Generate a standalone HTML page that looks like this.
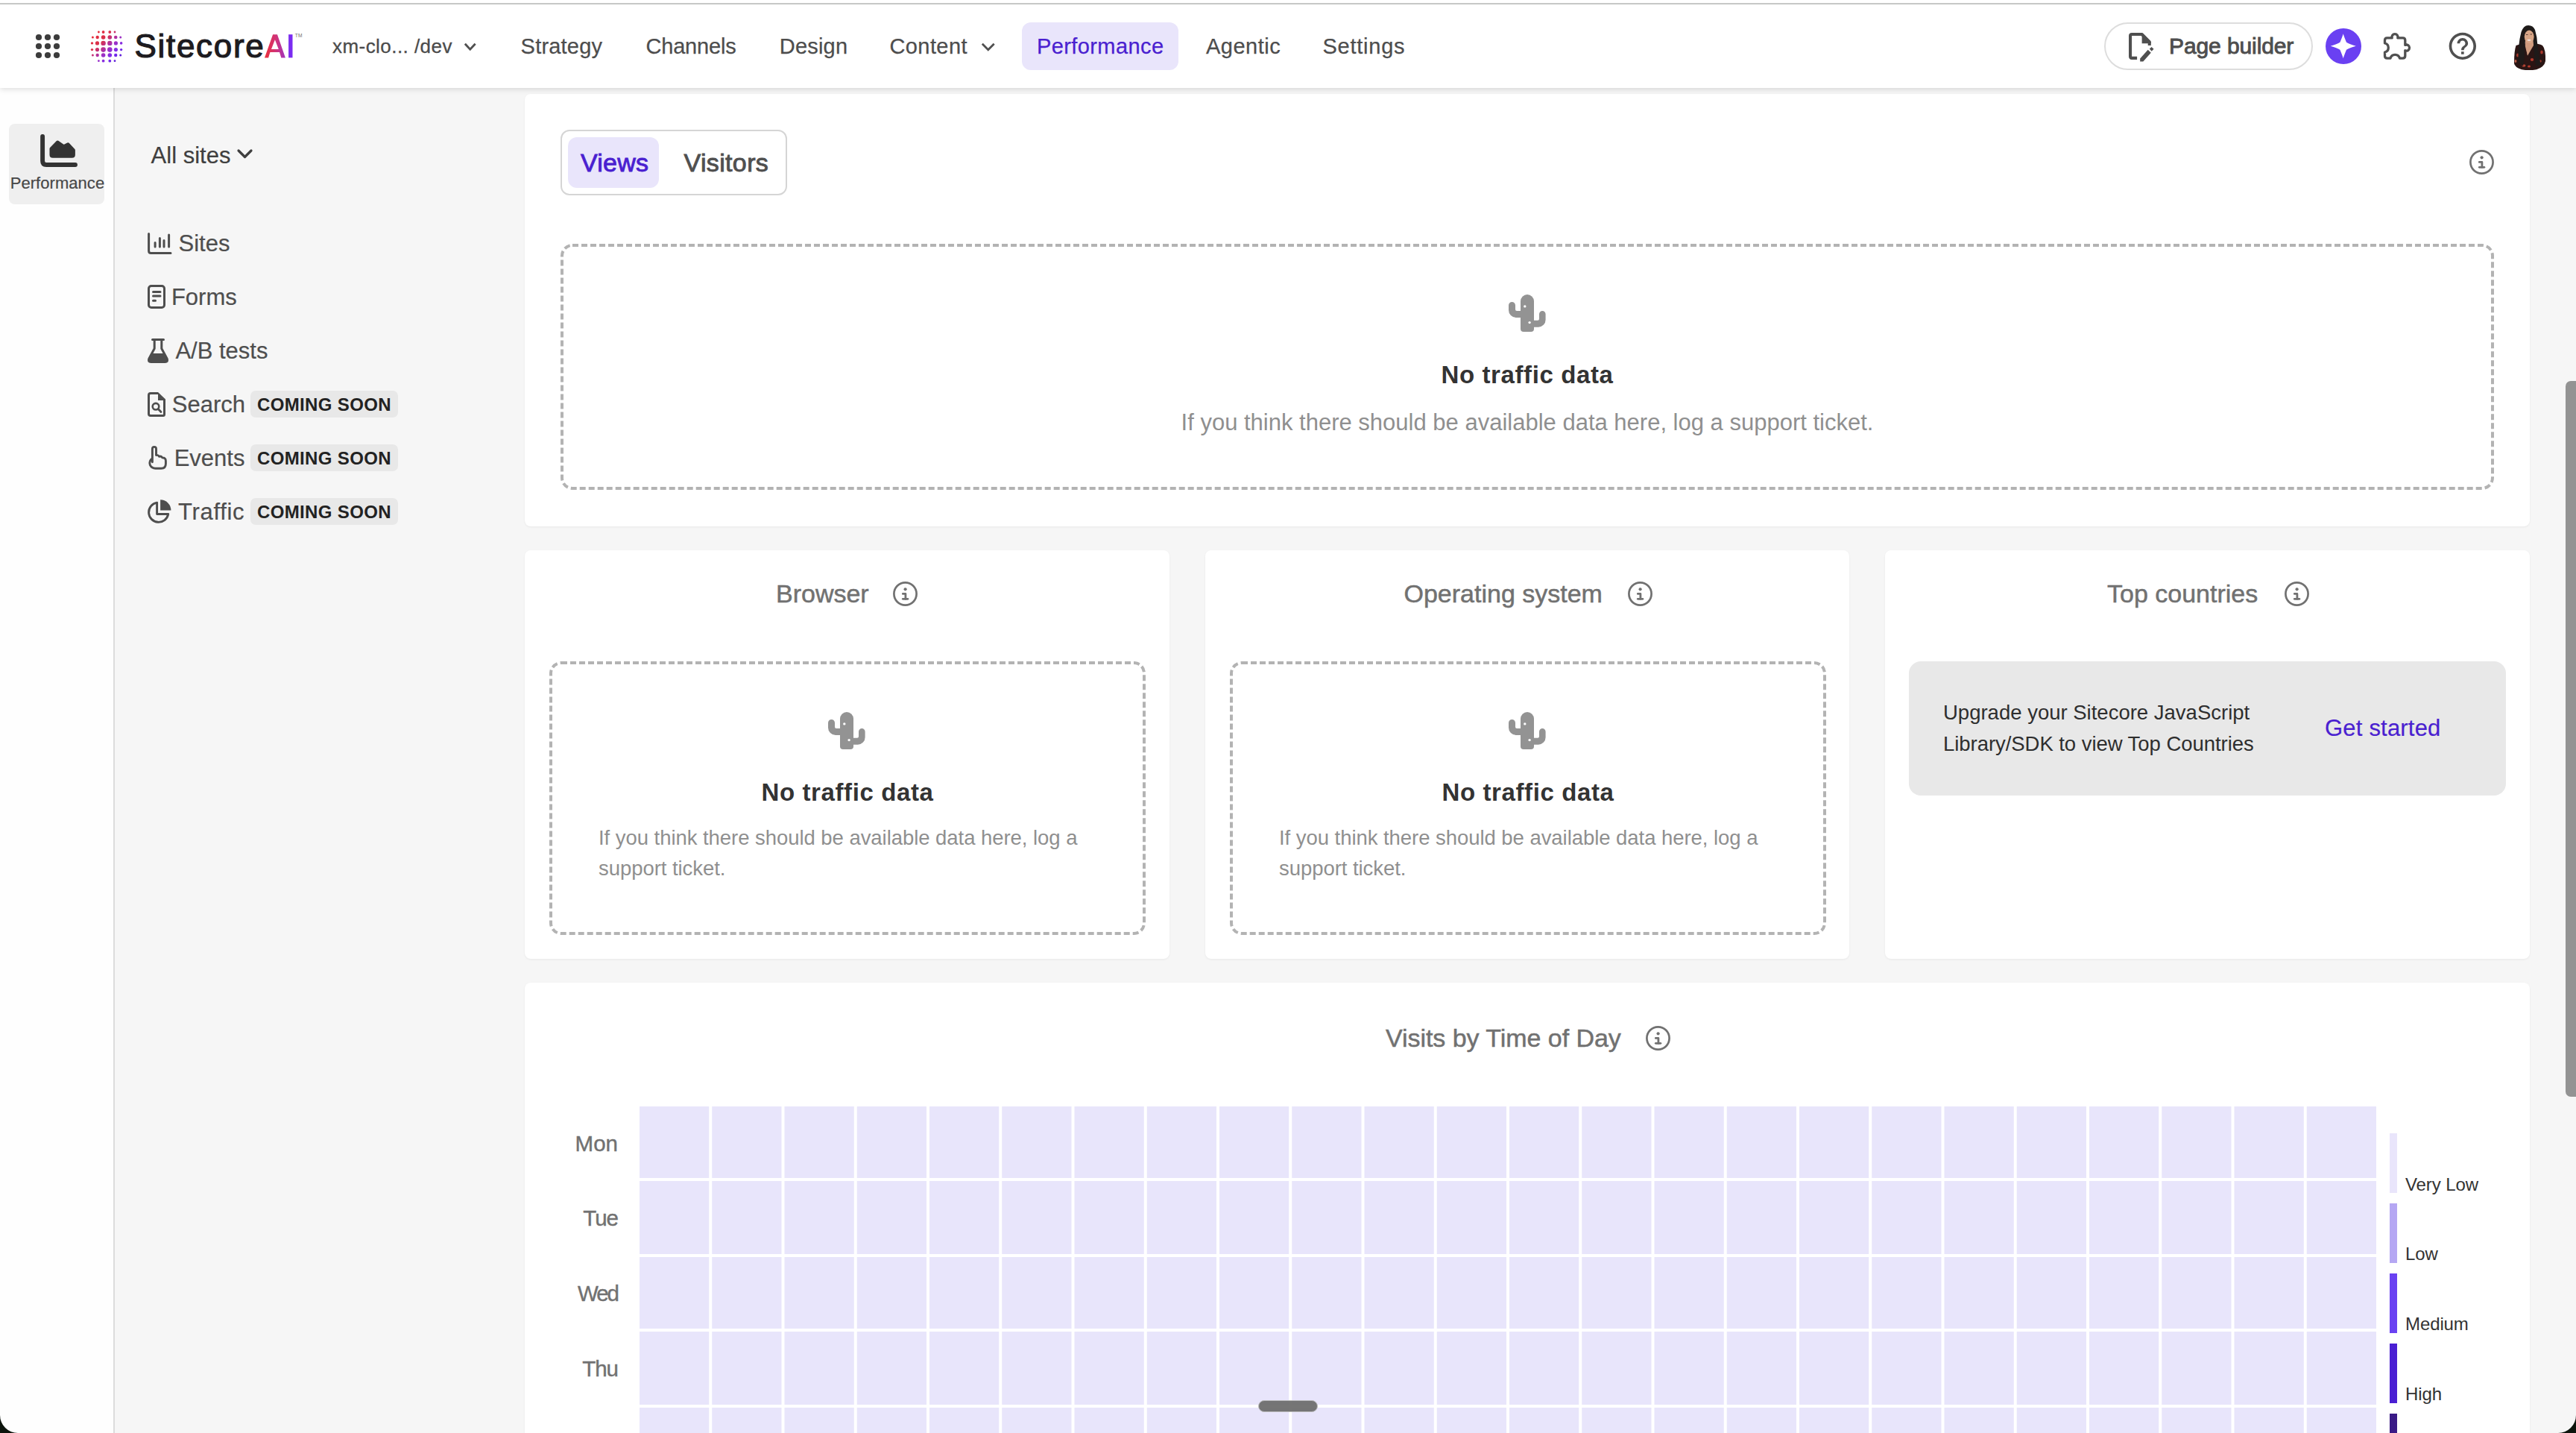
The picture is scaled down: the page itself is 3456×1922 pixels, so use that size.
<!DOCTYPE html>
<html><head><meta charset="utf-8"><style>
html,body{margin:0;padding:0;width:3456px;height:1922px;overflow:hidden;background:#0c140c}
#win{position:absolute;left:0;top:0;width:3456px;height:1922px;overflow:hidden;background:#f6f6f6;font-family:'Liberation Sans', sans-serif}
.a{position:absolute;display:block}
.t{position:absolute;line-height:1;white-space:nowrap;font-family:'Liberation Sans', sans-serif}
svg.a{overflow:visible}
@media (max-width:1800px){html{zoom:0.5}}
</style></head><body>
<div id="win"><div class="a" style="left:0px;top:0px;width:3456px;height:118px;background:#fff;box-shadow:0 2px 7px rgba(0,0,0,0.13);z-index:5"></div><div class="a" style="left:0px;top:4px;width:3456px;height:2px;background:#c7c8c7;z-index:6"></div><div id="hdr" style="position:absolute;left:0;top:0;width:3456px;height:118px;z-index:7"><svg class="a" style="left:44px;top:46px" width="40" height="40" viewBox="0 0 40 40"><circle cx="8" cy="4" r="4.1" fill="#3c3c3c"/><circle cx="8" cy="16" r="4.1" fill="#3c3c3c"/><circle cx="8" cy="28" r="4.1" fill="#3c3c3c"/><circle cx="20" cy="4" r="4.1" fill="#3c3c3c"/><circle cx="20" cy="16" r="4.1" fill="#3c3c3c"/><circle cx="20" cy="28" r="4.1" fill="#3c3c3c"/><circle cx="32" cy="4" r="4.1" fill="#3c3c3c"/><circle cx="32" cy="16" r="4.1" fill="#3c3c3c"/><circle cx="32" cy="28" r="4.1" fill="#3c3c3c"/></svg><svg class="a" style="left:118px;top:38px" width="50" height="50" viewBox="118 38 50 50"><defs><linearGradient id="lg" gradientUnits="userSpaceOnUse" x1="120" y1="40" x2="166" y2="86"><stop offset="0" stop-color="#f2262c"/><stop offset="0.35" stop-color="#d8324e"/><stop offset="0.55" stop-color="#a030c0"/><stop offset="0.72" stop-color="#7a2cf2"/><stop offset="1" stop-color="#3308b0"/></linearGradient></defs><circle cx="132.4" cy="43.0" r="1.4" fill="url(#lg)"/><circle cx="138.6" cy="43.0" r="1.9" fill="url(#lg)"/><circle cx="147.3" cy="43.0" r="1.9" fill="url(#lg)"/><circle cx="154.0" cy="43.0" r="1.4" fill="url(#lg)"/><circle cx="124.4" cy="50.0" r="1.5" fill="url(#lg)"/><circle cx="130.7" cy="50.0" r="2.2" fill="url(#lg)"/><circle cx="138.6" cy="50.0" r="2.8" fill="url(#lg)"/><circle cx="147.3" cy="50.0" r="2.8" fill="url(#lg)"/><circle cx="155.2" cy="50.0" r="2.3" fill="url(#lg)"/><circle cx="161.7" cy="50.0" r="1.5" fill="url(#lg)"/><circle cx="123.5" cy="57.9" r="1.7" fill="url(#lg)"/><circle cx="130.5" cy="57.9" r="2.6" fill="url(#lg)"/><circle cx="138.6" cy="57.9" r="3.2" fill="url(#lg)"/><circle cx="147.3" cy="57.9" r="3.2" fill="url(#lg)"/><circle cx="155.4" cy="57.9" r="2.6" fill="url(#lg)"/><circle cx="162.6" cy="57.9" r="1.8" fill="url(#lg)"/><circle cx="123.5" cy="66.6" r="1.7" fill="url(#lg)"/><circle cx="130.5" cy="66.6" r="2.6" fill="url(#lg)"/><circle cx="138.6" cy="66.6" r="3.3" fill="url(#lg)"/><circle cx="147.3" cy="66.6" r="3.3" fill="url(#lg)"/><circle cx="155.4" cy="66.6" r="2.6" fill="url(#lg)"/><circle cx="162.6" cy="66.6" r="1.7" fill="url(#lg)"/><circle cx="124.4" cy="74.0" r="1.5" fill="url(#lg)"/><circle cx="130.7" cy="74.0" r="2.2" fill="url(#lg)"/><circle cx="138.6" cy="74.0" r="2.8" fill="url(#lg)"/><circle cx="147.3" cy="74.0" r="2.8" fill="url(#lg)"/><circle cx="155.2" cy="74.0" r="2.2" fill="url(#lg)"/><circle cx="161.7" cy="74.0" r="1.5" fill="url(#lg)"/><circle cx="132.4" cy="81.7" r="1.4" fill="url(#lg)"/><circle cx="138.6" cy="81.7" r="1.9" fill="url(#lg)"/><circle cx="147.3" cy="81.7" r="1.9" fill="url(#lg)"/><circle cx="154.0" cy="81.7" r="1.4" fill="url(#lg)"/></svg><div class="t" style="left:180.5px;top:40.4px;font-size:44px;color:#1d1b20;letter-spacing:1.7px;-webkit-text-stroke:1.2px #1d1b20">Sitecore</div><svg class="a" style="left:350px;top:40px" width="60" height="42" viewBox="350 40 60 42"><defs><linearGradient id="aig" gradientUnits="userSpaceOnUse" x1="355" y1="0" x2="393" y2="0"><stop offset="0" stop-color="#ec2f3a"/><stop offset="0.45" stop-color="#cc3480"/><stop offset="0.72" stop-color="#a034bc"/><stop offset="0.86" stop-color="#7b2cf0"/><stop offset="1" stop-color="#7a2cf2"/></linearGradient></defs><path fill-rule="evenodd" fill="url(#aig)" d="M355,77.4 L366.1,46.2 H372 L382.9,77.4 H377.3 L375,69.9 H362.4 L360.1,77.4 Z M364,66 H373.8 L368.9,53.2 Z"/><rect x="387.1" y="46.2" width="5.4" height="31.2" fill="url(#aig)"/></svg><div class="t" style="left:395.8px;top:45.2px;font-size:6.6px;color:#707070;letter-spacing:0.1px">TM</div><div class="t" style="left:446px;top:49px;font-size:26px;color:#4b4b4b;letter-spacing:0.45px;-webkit-text-stroke:0.3px #4b4b4b;">xm-clo... /dev</div><svg class="a" style="left:623px;top:57.5px" width="15.5" height="10" viewBox="0 0 15.5 10"><polyline points="1.8,1.8 7.75,8.2 13.7,1.8" fill="none" stroke="#505050" stroke-width="2.8" stroke-linecap="square"/></svg><div class="t" style="left:698.6px;top:48px;font-size:29px;color:#4d4d4d;letter-spacing:0.2px;-webkit-text-stroke:0.25px #4d4d4d;">Strategy</div><div class="t" style="left:866.5px;top:48px;font-size:29px;color:#4d4d4d;letter-spacing:-0.2px;-webkit-text-stroke:0.25px #4d4d4d;">Channels</div><div class="t" style="left:1045.8px;top:48px;font-size:29px;color:#4d4d4d;letter-spacing:0.2px;-webkit-text-stroke:0.25px #4d4d4d;">Design</div><div class="t" style="left:1193.5px;top:48px;font-size:29px;color:#4d4d4d;letter-spacing:0.4px;-webkit-text-stroke:0.25px #4d4d4d;">Content</div><svg class="a" style="left:1316.5px;top:57.5px" width="17.5" height="10.5" viewBox="0 0 17.5 10.5"><polyline points="1.8,1.8 8.75,8.7 15.7,1.8" fill="none" stroke="#505050" stroke-width="2.8" stroke-linecap="square"/></svg><div class="a" style="left:1371px;top:30px;width:210px;height:64px;background:#e9e5fb;border-radius:12px"></div><div class="t" style="left:1391px;top:48px;font-size:29px;color:#4a1fd0;letter-spacing:0.4px;-webkit-text-stroke:0.25px #4a1fd0;">Performance</div><div class="t" style="left:1618px;top:48px;font-size:29px;color:#4d4d4d;letter-spacing:0.5px;-webkit-text-stroke:0.25px #4d4d4d;">Agentic</div><div class="t" style="left:1774.5px;top:48px;font-size:29px;color:#4d4d4d;letter-spacing:0.75px;-webkit-text-stroke:0.25px #4d4d4d;">Settings</div><div class="a" style="left:2823px;top:30px;width:280px;height:64px;border:2px solid #dddddd;border-radius:32px;box-sizing:border-box"></div><svg class="a" style="left:2856px;top:43.6px" width="38" height="40" viewBox="0 0 38 40"><path d="M11.1,33.9 H4.1 Q2.05,33.9 2.05,31.8 V4.1 Q2.05,2.05 4.1,2.05 H17.6 L27.75,12.2 V16.9" fill="none" stroke="#4f4f4f" stroke-width="4.1" stroke-linejoin="round"/><path d="M17.6,0 L29.8,12.2 L29.8,14.2 L17.6,14.2 Z" fill="#4f4f4f"/><path d="M15.2,34.4 L15.2,38.5 L19.3,38.5 L29.8,26.8 L25.7,22.7 Z" fill="#4f4f4f"/><path d="M27.8,21.6 L30.6,18.9 L33.5,21.8 L30.7,24.7 Z" fill="#4f4f4f"/></svg><div class="t" style="left:2910px;top:47.2px;font-size:30px;color:#4e4e4e;letter-spacing:-0.1px;-webkit-text-stroke:0.9px #4e4e4e;">Page builder</div><svg class="a" style="left:3120px;top:38px" width="48" height="48" viewBox="0 0 48 48"><circle cx="24" cy="24" r="24" fill="#6a40f2"/><path d="M23.7,7.2 Q24.4,10 28,18.8 Q32,21.2 40.8,23.8 Q32,26.4 28,28.8 Q24.4,37.6 23.7,40.4 Q23,37.6 19.4,28.8 Q15.4,26.4 6.7,23.8 Q15.4,21.2 19.4,18.8 Q23,10 23.7,7.2 Z" fill="#fff"/></svg><svg class="a" style="left:3190px;top:35px" width="50" height="50" viewBox="3190 35 50 50"><path d="M3209.2,50.9 A4,4 0 1 1 3216.8,50.9 H3223.7 Q3226.8,50.9 3226.8,54 V60.4 A4.07,4.07 0 1 1 3226.8,67.8 V75.1 Q3226.8,78.2 3223.7,78.2 H3219.5 A6.46,6.46 0 0 0 3207,78.2 H3202.6 Q3199.5,78.2 3199.5,75.1 V70 A6.15,6.15 0 0 0 3199.5,58 V54 Q3199.5,50.9 3202.6,50.9 Z" fill="none" stroke="#505050" stroke-width="3.3" stroke-linejoin="round"/></svg><svg class="a" style="left:3282.2px;top:40px" width="43.7" height="43.7" viewBox="0 0 24 24"><path fill="#505050" d="M11 18h2v-2h-2v2zm1-16C6.48 2 2 6.48 2 12s4.48 10 10 10 10-4.48 10-10S17.52 2 12 2zm0 18c-4.41 0-8-3.59-8-8s3.59-8 8-8 8 3.59 8 8-3.590 8-8 8zm0-14c-2.210 0-4 1.79-4 4h2c0-1.1.9-2 2-2s2 .9 2 2c0 2-3 1.75-3 5h2c0-2.25 3-2.5 3-5 0-2.21-1.79-4-4-4z"/></svg><svg class="a" style="left:3366px;top:30px" width="56" height="68" viewBox="0 0 56 68"><path d="M9.5,31 Q16,28.5 22.8,28.3 L32.3,28.3 Q40,28.5 45,31 Q49.6,36 49,52 Q47.5,60 37,63.2 Q27,65 17,63.2 Q7.5,60 7,55 Q7,38 9.5,31 Z" fill="#2a1514"/><ellipse cx="12" cy="44" rx="2" ry="2.6" fill="#a8382b"/><ellipse cx="20" cy="58" rx="2.5" ry="1.8" fill="#b04232"/><ellipse cx="31" cy="50" rx="2.2" ry="2" fill="#b5392c"/><ellipse cx="44" cy="40" rx="1.8" ry="2.6" fill="#a8382b"/><ellipse cx="42" cy="52" rx="1.8" ry="1.8" fill="#9c3a2e"/><ellipse cx="27" cy="59" rx="2" ry="1.6" fill="#b5392c"/><ellipse cx="9" cy="52" rx="1.4" ry="2" fill="#c0604a"/><path d="M22,28 L33,28 L25,44.5 Z" fill="#cf9b7e"/><path d="M21.6,21 L33,21 L33,31 L25,44.5 L21.6,31 Z" fill="#cf9b7e"/><path d="M12.5,53 Q12,30 16.5,13 Q19.5,4 26,4 Q32.5,4 35,10 Q38,20 38.2,29 Q40.5,44 42.5,57 L36,58.5 Q33.5,42 32.8,27 Q32,14 27,11.5 Q22,14 21.8,27 Q21.5,46 19,58.5 Z" fill="#1e1a19"/><ellipse cx="27.2" cy="19.3" rx="6.4" ry="8.7" fill="#d8a687"/><path d="M23,16.5 H25.5 M28.5,16 H31" stroke="#5a4038" stroke-width="1"/><ellipse cx="27" cy="23.8" rx="2.6" ry="1.1" fill="#f1e1dc"/></svg></div><div class="a" style="left:0px;top:118px;width:152px;height:1804px;background:#fefefe"></div><div class="a" style="left:152px;top:118px;width:2px;height:1804px;background:#dcdcdc"></div><div class="a" style="left:154px;top:118px;width:3302px;height:1804px;background:#f6f6f6"></div><div class="a" style="left:12px;top:166px;width:128px;height:108px;background:#efefef;border-radius:8px"></div><svg class="a" style="left:50px;top:178px" width="58" height="50" viewBox="0 0 58 50"><path d="M7.1,5 V38 Q7.1,43 12.1,43 H51" fill="none" stroke="#333" stroke-width="5.9" stroke-linecap="round" stroke-linejoin="round"/><path d="M18.6,21.5 L27.1,12.6 L35.4,18.3 L41.3,15.3 L48.8,23.5 V29.5 Q48.8,31.7 46.6,31.7 H20.8 Q18.6,31.7 18.6,29.5 Z" fill="#333" stroke="#333" stroke-width="4.2" stroke-linejoin="round"/></svg><div class="t" style="left:13.7px;top:234.8px;font-size:22px;color:#474747;letter-spacing:0.05px;-webkit-text-stroke:0.2px #474747;">Performance</div><div class="t" style="left:202.6px;top:193.3px;font-size:31px;color:#3f3f3f;-webkit-text-stroke:0.2px #3f3f3f;">All sites</div><svg class="a" style="left:318px;top:200px" width="21" height="13" viewBox="0 0 21 13"><polyline points="2,2 10.5,10.5 19,2" fill="none" stroke="#3f3f3f" stroke-width="3.2" stroke-linecap="round" stroke-linejoin="round"/></svg><svg class="a" style="left:198px;top:312px" width="33" height="29" viewBox="0 0 33 29"><path d="M1.6,1.5 V24.4 Q1.6,27.4 4.6,27.4 H31" fill="none" stroke="#4e4e4e" stroke-width="3" stroke-linecap="round" stroke-linejoin="round"/><path d="M10.1,13.5 V19 M16.4,7.5 V19 M22,10.5 V19 M28.6,3 V19" stroke="#4e4e4e" stroke-width="3" stroke-linecap="round"/></svg><div class="t" style="left:239.5px;top:311px;font-size:31px;color:#4e4e4e;-webkit-text-stroke:0.2px #4e4e4e;">Sites</div><svg class="a" style="left:198px;top:382px" width="24" height="32" viewBox="0 0 24 32"><rect x="1.5" y="1.5" width="21" height="29" rx="3.5" fill="none" stroke="#4e4e4e" stroke-width="3"/><path d="M7.5,9.4 H17 M7.5,15 H17 M7.5,21.3 H10.5" stroke="#4e4e4e" stroke-width="3" stroke-linecap="round"/></svg><div class="t" style="left:229.9px;top:383px;font-size:31px;color:#4e4e4e;-webkit-text-stroke:0.2px #4e4e4e;">Forms</div><svg class="a" style="left:198px;top:454px" width="28" height="33" viewBox="0 0 28 33"><path d="M6.5,1.6 H21.5" stroke="#4e4e4e" stroke-width="3" stroke-linecap="round"/><path d="M9.2,2 V13.5 L1.8,27.2 Q0.3,31.5 4.5,31.5 H23.5 Q27.7,31.5 26.2,27.2 L18.8,13.5 V2" fill="none" stroke="#4e4e4e" stroke-width="3" stroke-linejoin="round"/><path d="M5,20 H23 L26.8,27.8 Q27.8,32 23.5,32 H4.5 Q0.2,32 1.2,27.8 Z" fill="#4e4e4e"/></svg><div class="t" style="left:235.4px;top:455.4px;font-size:31px;color:#4e4e4e;-webkit-text-stroke:0.2px #4e4e4e;">A/B tests</div><svg class="a" style="left:198px;top:525.8px" width="25" height="33" viewBox="0 0 25 33"><path d="M14,1.5 H4 Q1.5,1.5 1.5,4 V29 Q1.5,31.5 4,31.5 H21 Q22.5,31.5 22.5,29.5 V10" fill="none" stroke="#4e4e4e" stroke-width="3" stroke-linejoin="round"/><path d="M14,0 L24,9.5 L24,11 L14,11 Z" fill="#4e4e4e"/><circle cx="11" cy="19.2" r="4.3" fill="none" stroke="#4e4e4e" stroke-width="2.6"/><path d="M14.2,22.6 L18,26.5" stroke="#4e4e4e" stroke-width="2.8" stroke-linecap="round"/></svg><div class="t" style="left:230.8px;top:527.2px;font-size:31px;color:#4e4e4e;-webkit-text-stroke:0.2px #4e4e4e;">Search</div><svg class="a" style="left:198px;top:597px" width="28" height="35" viewBox="0 0 28 35"><path d="M6.4,22.7 V4.9 A2.55,2.55 0 0 1 11.5,4.9 V13.6 Q13.9,12.8 15.7,15.3 Q17.9,14.4 19.9,16.9 Q24.4,16.9 24.4,21.2 V25 Q24.4,31.2 18.3,31.2 H10.5 Q5.6,31.2 3.3,26.6 Q1.4,21.6 6.4,17.6" fill="none" stroke="#4e4e4e" stroke-width="2.9" stroke-linecap="round" stroke-linejoin="round"/></svg><div class="t" style="left:233.7px;top:599px;font-size:31px;color:#4e4e4e;-webkit-text-stroke:0.2px #4e4e4e;">Events</div><svg class="a" style="left:198px;top:670px" width="33" height="33" viewBox="0 0 33 33"><path d="M12.6,4.1 A13.2,13.2 0 1 0 27.74,19.5 H12.6 Z" fill="none" stroke="#4e4e4e" stroke-width="2.9" stroke-linejoin="round"/><path d="M17.1,0.2 A14.3,14.3 0 0 1 31.4,14.5 H17.1 Z" fill="#4e4e4e"/></svg><div class="t" style="left:239px;top:671.3px;font-size:31px;color:#4e4e4e;letter-spacing:0.7px;-webkit-text-stroke:0.2px #4e4e4e;">Traffic</div><div class="a" style="left:336px;top:524px;width:197.5px;height:36px;background:#e8e8e8;border-radius:7px"></div><div class="t" style="left:345px;top:531.3px;font-size:24px;color:#222;font-weight:700;letter-spacing:0.35px;">COMING SOON</div><div class="a" style="left:336px;top:596px;width:197.5px;height:36px;background:#e8e8e8;border-radius:7px"></div><div class="t" style="left:345px;top:603.3px;font-size:24px;color:#222;font-weight:700;letter-spacing:0.35px;">COMING SOON</div><div class="a" style="left:336px;top:668px;width:197.5px;height:36px;background:#e8e8e8;border-radius:7px"></div><div class="t" style="left:345px;top:675.3px;font-size:24px;color:#222;font-weight:700;letter-spacing:0.35px;">COMING SOON</div><div class="a" style="left:704px;top:126px;width:2690px;height:580px;background:#fff;border-radius:8px;box-shadow:0 1px 3px rgba(0,0,0,0.06)"></div><div class="a" style="left:752px;top:174px;width:304px;height:88px;border:2px solid #d5d5d5;border-radius:12px;box-sizing:border-box"></div><div class="a" style="left:762px;top:184px;width:122px;height:68px;background:#e9e5fb;border-radius:12px"></div><div class="t" style="left:779px;top:201px;font-size:34px;color:#4a1fd0;letter-spacing:0.2px;-webkit-text-stroke:0.9px #4a1fd0;">Views</div><div class="t" style="left:917.5px;top:201px;font-size:34px;color:#4f4f4f;letter-spacing:0.35px;-webkit-text-stroke:0.9px #4f4f4f;">Visitors</div><svg class="a" style="left:3313px;top:201px" width="33" height="33" viewBox="0 0 33 33"><circle cx="16.5" cy="16.5" r="15.1" fill="none" stroke="#717171" stroke-width="2.7"/><circle cx="16.6" cy="10.3" r="2.1" fill="#717171"/><path d="M13.3,16.4 H16.9 V23.3" fill="none" stroke="#717171" stroke-width="2.8" stroke-linecap="round" stroke-linejoin="round"/><path d="M13.3,23.3 H19.9" stroke="#717171" stroke-width="2.8" stroke-linecap="round"/></svg><svg class="a" style="left:752px;top:327px" width="2594" height="330" viewBox="0 0 2594 330"><rect x="2" y="2" width="2590" height="326" rx="14" fill="none" stroke="#b3b3b3" stroke-width="4" stroke-dasharray="8 4"/></svg><svg class="a" style="left:2024px;top:395px" width="50" height="50" viewBox="0 0 50 50"><path d="M16,9 A9,9 0 0 1 34,9 V46 A4,4 0 0 1 30,50 H20 A4,4 0 0 1 16,46 Z" fill="#939393"/><path d="M0,14.5 A4.5,4.5 0 0 1 9,14.5 V20 A2,2 0 0 0 11,22 H17 V31 H10 A10,10 0 0 1 0,21 Z" fill="#939393"/><path d="M41,26.3 A4.3,4.3 0 0 1 49.6,26.3 V34 A9.7,9.7 0 0 1 39.9,43.7 H33 V34.7 H39 A2,2 0 0 0 41,32.7 Z" fill="#939393"/><circle cx="21.8" cy="15.9" r="1.7" fill="#fff"/><circle cx="28.1" cy="37.6" r="1.7" fill="#fff"/></svg><div class="t" style="left:49px;width:4000px;text-align:center;top:486.29999999999995px;font-size:33px;color:#333;font-weight:700;letter-spacing:0.6px;">No traffic data</div><div class="t" style="left:49px;width:4000px;text-align:center;top:551px;font-size:31px;color:#8f8f8f;">If you think there should be available data here, log a support ticket.</div><div class="a" style="left:704px;top:738px;width:865px;height:548px;background:#fff;border-radius:8px;box-shadow:0 1px 3px rgba(0,0,0,0.06)"></div><div class="a" style="left:1617px;top:738px;width:864px;height:548px;background:#fff;border-radius:8px;box-shadow:0 1px 3px rgba(0,0,0,0.06)"></div><div class="a" style="left:2529px;top:738px;width:865px;height:548px;background:#fff;border-radius:8px;box-shadow:0 1px 3px rgba(0,0,0,0.06)"></div><div class="t" style="left:1041px;top:779px;font-size:34px;color:#717171;-webkit-text-stroke:0.5px #717171;">Browser</div><svg class="a" style="left:1198px;top:779.5px" width="33" height="33" viewBox="0 0 33 33"><circle cx="16.5" cy="16.5" r="15.1" fill="none" stroke="#717171" stroke-width="2.7"/><circle cx="16.6" cy="10.3" r="2.1" fill="#717171"/><path d="M13.3,16.4 H16.9 V23.3" fill="none" stroke="#717171" stroke-width="2.8" stroke-linecap="round" stroke-linejoin="round"/><path d="M13.3,23.3 H19.9" stroke="#717171" stroke-width="2.8" stroke-linecap="round"/></svg><div class="t" style="left:1883.5px;top:779px;font-size:34px;color:#717171;-webkit-text-stroke:0.5px #717171;">Operating system</div><svg class="a" style="left:2183.5px;top:779.5px" width="33" height="33" viewBox="0 0 33 33"><circle cx="16.5" cy="16.5" r="15.1" fill="none" stroke="#717171" stroke-width="2.7"/><circle cx="16.6" cy="10.3" r="2.1" fill="#717171"/><path d="M13.3,16.4 H16.9 V23.3" fill="none" stroke="#717171" stroke-width="2.8" stroke-linecap="round" stroke-linejoin="round"/><path d="M13.3,23.3 H19.9" stroke="#717171" stroke-width="2.8" stroke-linecap="round"/></svg><div class="t" style="left:2827px;top:779px;font-size:34px;color:#717171;-webkit-text-stroke:0.5px #717171;">Top countries</div><svg class="a" style="left:3064.6px;top:779.5px" width="33" height="33" viewBox="0 0 33 33"><circle cx="16.5" cy="16.5" r="15.1" fill="none" stroke="#717171" stroke-width="2.7"/><circle cx="16.6" cy="10.3" r="2.1" fill="#717171"/><path d="M13.3,16.4 H16.9 V23.3" fill="none" stroke="#717171" stroke-width="2.8" stroke-linecap="round" stroke-linejoin="round"/><path d="M13.3,23.3 H19.9" stroke="#717171" stroke-width="2.8" stroke-linecap="round"/></svg><svg class="a" style="left:737px;top:887px" width="800" height="367" viewBox="0 0 800 367"><rect x="2" y="2" width="796" height="363" rx="14" fill="none" stroke="#b3b3b3" stroke-width="4" stroke-dasharray="8 4"/></svg><svg class="a" style="left:1111px;top:955px" width="50" height="50" viewBox="0 0 50 50"><path d="M16,9 A9,9 0 0 1 34,9 V46 A4,4 0 0 1 30,50 H20 A4,4 0 0 1 16,46 Z" fill="#939393"/><path d="M0,14.5 A4.5,4.5 0 0 1 9,14.5 V20 A2,2 0 0 0 11,22 H17 V31 H10 A10,10 0 0 1 0,21 Z" fill="#939393"/><path d="M41,26.3 A4.3,4.3 0 0 1 49.6,26.3 V34 A9.7,9.7 0 0 1 39.9,43.7 H33 V34.7 H39 A2,2 0 0 0 41,32.7 Z" fill="#939393"/><circle cx="21.8" cy="15.9" r="1.7" fill="#fff"/><circle cx="28.1" cy="37.6" r="1.7" fill="#fff"/></svg><div class="t" style="left:-863px;width:4000px;text-align:center;top:1046px;font-size:33px;color:#333;font-weight:700;letter-spacing:0.6px;">No traffic data</div><div class="t" style="left:803px;top:1109.5px;font-size:27.5px;color:#8f8f8f;letter-spacing:-0.05px;">If you think there should be available data here, log a</div><div class="t" style="left:803px;top:1151px;font-size:27.5px;color:#8f8f8f;letter-spacing:-0.05px;">support ticket.</div><svg class="a" style="left:1650px;top:887px" width="800" height="367" viewBox="0 0 800 367"><rect x="2" y="2" width="796" height="363" rx="14" fill="none" stroke="#b3b3b3" stroke-width="4" stroke-dasharray="8 4"/></svg><svg class="a" style="left:2024px;top:955px" width="50" height="50" viewBox="0 0 50 50"><path d="M16,9 A9,9 0 0 1 34,9 V46 A4,4 0 0 1 30,50 H20 A4,4 0 0 1 16,46 Z" fill="#939393"/><path d="M0,14.5 A4.5,4.5 0 0 1 9,14.5 V20 A2,2 0 0 0 11,22 H17 V31 H10 A10,10 0 0 1 0,21 Z" fill="#939393"/><path d="M41,26.3 A4.3,4.3 0 0 1 49.6,26.3 V34 A9.7,9.7 0 0 1 39.9,43.7 H33 V34.7 H39 A2,2 0 0 0 41,32.7 Z" fill="#939393"/><circle cx="21.8" cy="15.9" r="1.7" fill="#fff"/><circle cx="28.1" cy="37.6" r="1.7" fill="#fff"/></svg><div class="t" style="left:50px;width:4000px;text-align:center;top:1046px;font-size:33px;color:#333;font-weight:700;letter-spacing:0.6px;">No traffic data</div><div class="t" style="left:1716px;top:1109.5px;font-size:27.5px;color:#8f8f8f;letter-spacing:-0.05px;">If you think there should be available data here, log a</div><div class="t" style="left:1716px;top:1151px;font-size:27.5px;color:#8f8f8f;letter-spacing:-0.05px;">support ticket.</div><div class="a" style="left:2561px;top:887px;width:801px;height:180px;background:#e8e8e8;border-radius:16px"></div><div class="t" style="left:2607px;top:942.3px;font-size:27.5px;color:#2e2e2e;">Upgrade your Sitecore JavaScript</div><div class="t" style="left:2607px;top:984.4px;font-size:27.5px;color:#2e2e2e;letter-spacing:-0.05px;">Library/SDK to view Top Countries</div><div class="t" style="left:3119px;top:961px;font-size:31px;color:#4a1fd0;letter-spacing:0.2px;-webkit-text-stroke:0.2px #4a1fd0;">Get started</div><div class="a" style="left:704px;top:1318px;width:2690px;height:782px;background:#fff;border-radius:8px;box-shadow:0 1px 3px rgba(0,0,0,0.06)"></div><div class="t" style="left:1859px;top:1374.7px;font-size:34px;color:#717171;letter-spacing:-0.05px;-webkit-text-stroke:0.5px #717171;">Visits by Time of Day</div><svg class="a" style="left:2208px;top:1375.5px" width="33" height="33" viewBox="0 0 33 33"><circle cx="16.5" cy="16.5" r="15.1" fill="none" stroke="#717171" stroke-width="2.7"/><circle cx="16.6" cy="10.3" r="2.1" fill="#717171"/><path d="M13.3,16.4 H16.9 V23.3" fill="none" stroke="#717171" stroke-width="2.8" stroke-linecap="round" stroke-linejoin="round"/><path d="M13.3,23.3 H19.9" stroke="#717171" stroke-width="2.8" stroke-linecap="round"/></svg><div class="t" style="left:-1171.0px;width:2000px;text-align:right;top:1519px;font-size:29.5px;color:#717171;-webkit-text-stroke:0.4px #717171;">Mon</div><div class="t" style="left:-1171.0px;width:2000px;text-align:right;top:1619px;font-size:29.5px;color:#717171;letter-spacing:-1px;-webkit-text-stroke:0.4px #717171;">Tue</div><div class="t" style="left:-1171.0px;width:2000px;text-align:right;top:1720px;font-size:29.5px;color:#717171;letter-spacing:-2px;-webkit-text-stroke:0.4px #717171;">Wed</div><div class="t" style="left:-1171.0px;width:2000px;text-align:right;top:1821px;font-size:29.5px;color:#717171;letter-spacing:-1px;-webkit-text-stroke:0.4px #717171;">Thu</div><svg class="a" style="left:858px;top:1484px" width="2330" height="440" viewBox="0 0 2330 440"><rect x="0.00" y="0" width="93.25" height="96" fill="#e8e5fb"/><rect x="97.25" y="0" width="93.25" height="96" fill="#e8e5fb"/><rect x="194.50" y="0" width="93.25" height="96" fill="#e8e5fb"/><rect x="291.75" y="0" width="93.25" height="96" fill="#e8e5fb"/><rect x="389.00" y="0" width="93.25" height="96" fill="#e8e5fb"/><rect x="486.25" y="0" width="93.25" height="96" fill="#e8e5fb"/><rect x="583.50" y="0" width="93.25" height="96" fill="#e8e5fb"/><rect x="680.75" y="0" width="93.25" height="96" fill="#e8e5fb"/><rect x="778.00" y="0" width="93.25" height="96" fill="#e8e5fb"/><rect x="875.25" y="0" width="93.25" height="96" fill="#e8e5fb"/><rect x="972.50" y="0" width="93.25" height="96" fill="#e8e5fb"/><rect x="1069.75" y="0" width="93.25" height="96" fill="#e8e5fb"/><rect x="1167.00" y="0" width="93.25" height="96" fill="#e8e5fb"/><rect x="1264.25" y="0" width="93.25" height="96" fill="#e8e5fb"/><rect x="1361.50" y="0" width="93.25" height="96" fill="#e8e5fb"/><rect x="1458.75" y="0" width="93.25" height="96" fill="#e8e5fb"/><rect x="1556.00" y="0" width="93.25" height="96" fill="#e8e5fb"/><rect x="1653.25" y="0" width="93.25" height="96" fill="#e8e5fb"/><rect x="1750.50" y="0" width="93.25" height="96" fill="#e8e5fb"/><rect x="1847.75" y="0" width="93.25" height="96" fill="#e8e5fb"/><rect x="1945.00" y="0" width="93.25" height="96" fill="#e8e5fb"/><rect x="2042.25" y="0" width="93.25" height="96" fill="#e8e5fb"/><rect x="2139.50" y="0" width="93.25" height="96" fill="#e8e5fb"/><rect x="2236.75" y="0" width="93.25" height="96" fill="#e8e5fb"/><rect x="0.00" y="100" width="93.25" height="98" fill="#e8e5fb"/><rect x="97.25" y="100" width="93.25" height="98" fill="#e8e5fb"/><rect x="194.50" y="100" width="93.25" height="98" fill="#e8e5fb"/><rect x="291.75" y="100" width="93.25" height="98" fill="#e8e5fb"/><rect x="389.00" y="100" width="93.25" height="98" fill="#e8e5fb"/><rect x="486.25" y="100" width="93.25" height="98" fill="#e8e5fb"/><rect x="583.50" y="100" width="93.25" height="98" fill="#e8e5fb"/><rect x="680.75" y="100" width="93.25" height="98" fill="#e8e5fb"/><rect x="778.00" y="100" width="93.25" height="98" fill="#e8e5fb"/><rect x="875.25" y="100" width="93.25" height="98" fill="#e8e5fb"/><rect x="972.50" y="100" width="93.25" height="98" fill="#e8e5fb"/><rect x="1069.75" y="100" width="93.25" height="98" fill="#e8e5fb"/><rect x="1167.00" y="100" width="93.25" height="98" fill="#e8e5fb"/><rect x="1264.25" y="100" width="93.25" height="98" fill="#e8e5fb"/><rect x="1361.50" y="100" width="93.25" height="98" fill="#e8e5fb"/><rect x="1458.75" y="100" width="93.25" height="98" fill="#e8e5fb"/><rect x="1556.00" y="100" width="93.25" height="98" fill="#e8e5fb"/><rect x="1653.25" y="100" width="93.25" height="98" fill="#e8e5fb"/><rect x="1750.50" y="100" width="93.25" height="98" fill="#e8e5fb"/><rect x="1847.75" y="100" width="93.25" height="98" fill="#e8e5fb"/><rect x="1945.00" y="100" width="93.25" height="98" fill="#e8e5fb"/><rect x="2042.25" y="100" width="93.25" height="98" fill="#e8e5fb"/><rect x="2139.50" y="100" width="93.25" height="98" fill="#e8e5fb"/><rect x="2236.75" y="100" width="93.25" height="98" fill="#e8e5fb"/><rect x="0.00" y="202" width="93.25" height="96" fill="#e8e5fb"/><rect x="97.25" y="202" width="93.25" height="96" fill="#e8e5fb"/><rect x="194.50" y="202" width="93.25" height="96" fill="#e8e5fb"/><rect x="291.75" y="202" width="93.25" height="96" fill="#e8e5fb"/><rect x="389.00" y="202" width="93.25" height="96" fill="#e8e5fb"/><rect x="486.25" y="202" width="93.25" height="96" fill="#e8e5fb"/><rect x="583.50" y="202" width="93.25" height="96" fill="#e8e5fb"/><rect x="680.75" y="202" width="93.25" height="96" fill="#e8e5fb"/><rect x="778.00" y="202" width="93.25" height="96" fill="#e8e5fb"/><rect x="875.25" y="202" width="93.25" height="96" fill="#e8e5fb"/><rect x="972.50" y="202" width="93.25" height="96" fill="#e8e5fb"/><rect x="1069.75" y="202" width="93.25" height="96" fill="#e8e5fb"/><rect x="1167.00" y="202" width="93.25" height="96" fill="#e8e5fb"/><rect x="1264.25" y="202" width="93.25" height="96" fill="#e8e5fb"/><rect x="1361.50" y="202" width="93.25" height="96" fill="#e8e5fb"/><rect x="1458.75" y="202" width="93.25" height="96" fill="#e8e5fb"/><rect x="1556.00" y="202" width="93.25" height="96" fill="#e8e5fb"/><rect x="1653.25" y="202" width="93.25" height="96" fill="#e8e5fb"/><rect x="1750.50" y="202" width="93.25" height="96" fill="#e8e5fb"/><rect x="1847.75" y="202" width="93.25" height="96" fill="#e8e5fb"/><rect x="1945.00" y="202" width="93.25" height="96" fill="#e8e5fb"/><rect x="2042.25" y="202" width="93.25" height="96" fill="#e8e5fb"/><rect x="2139.50" y="202" width="93.25" height="96" fill="#e8e5fb"/><rect x="2236.75" y="202" width="93.25" height="96" fill="#e8e5fb"/><rect x="0.00" y="302" width="93.25" height="98" fill="#e8e5fb"/><rect x="97.25" y="302" width="93.25" height="98" fill="#e8e5fb"/><rect x="194.50" y="302" width="93.25" height="98" fill="#e8e5fb"/><rect x="291.75" y="302" width="93.25" height="98" fill="#e8e5fb"/><rect x="389.00" y="302" width="93.25" height="98" fill="#e8e5fb"/><rect x="486.25" y="302" width="93.25" height="98" fill="#e8e5fb"/><rect x="583.50" y="302" width="93.25" height="98" fill="#e8e5fb"/><rect x="680.75" y="302" width="93.25" height="98" fill="#e8e5fb"/><rect x="778.00" y="302" width="93.25" height="98" fill="#e8e5fb"/><rect x="875.25" y="302" width="93.25" height="98" fill="#e8e5fb"/><rect x="972.50" y="302" width="93.25" height="98" fill="#e8e5fb"/><rect x="1069.75" y="302" width="93.25" height="98" fill="#e8e5fb"/><rect x="1167.00" y="302" width="93.25" height="98" fill="#e8e5fb"/><rect x="1264.25" y="302" width="93.25" height="98" fill="#e8e5fb"/><rect x="1361.50" y="302" width="93.25" height="98" fill="#e8e5fb"/><rect x="1458.75" y="302" width="93.25" height="98" fill="#e8e5fb"/><rect x="1556.00" y="302" width="93.25" height="98" fill="#e8e5fb"/><rect x="1653.25" y="302" width="93.25" height="98" fill="#e8e5fb"/><rect x="1750.50" y="302" width="93.25" height="98" fill="#e8e5fb"/><rect x="1847.75" y="302" width="93.25" height="98" fill="#e8e5fb"/><rect x="1945.00" y="302" width="93.25" height="98" fill="#e8e5fb"/><rect x="2042.25" y="302" width="93.25" height="98" fill="#e8e5fb"/><rect x="2139.50" y="302" width="93.25" height="98" fill="#e8e5fb"/><rect x="2236.75" y="302" width="93.25" height="98" fill="#e8e5fb"/><rect x="0.00" y="404" width="93.25" height="98" fill="#e8e5fb"/><rect x="97.25" y="404" width="93.25" height="98" fill="#e8e5fb"/><rect x="194.50" y="404" width="93.25" height="98" fill="#e8e5fb"/><rect x="291.75" y="404" width="93.25" height="98" fill="#e8e5fb"/><rect x="389.00" y="404" width="93.25" height="98" fill="#e8e5fb"/><rect x="486.25" y="404" width="93.25" height="98" fill="#e8e5fb"/><rect x="583.50" y="404" width="93.25" height="98" fill="#e8e5fb"/><rect x="680.75" y="404" width="93.25" height="98" fill="#e8e5fb"/><rect x="778.00" y="404" width="93.25" height="98" fill="#e8e5fb"/><rect x="875.25" y="404" width="93.25" height="98" fill="#e8e5fb"/><rect x="972.50" y="404" width="93.25" height="98" fill="#e8e5fb"/><rect x="1069.75" y="404" width="93.25" height="98" fill="#e8e5fb"/><rect x="1167.00" y="404" width="93.25" height="98" fill="#e8e5fb"/><rect x="1264.25" y="404" width="93.25" height="98" fill="#e8e5fb"/><rect x="1361.50" y="404" width="93.25" height="98" fill="#e8e5fb"/><rect x="1458.75" y="404" width="93.25" height="98" fill="#e8e5fb"/><rect x="1556.00" y="404" width="93.25" height="98" fill="#e8e5fb"/><rect x="1653.25" y="404" width="93.25" height="98" fill="#e8e5fb"/><rect x="1750.50" y="404" width="93.25" height="98" fill="#e8e5fb"/><rect x="1847.75" y="404" width="93.25" height="98" fill="#e8e5fb"/><rect x="1945.00" y="404" width="93.25" height="98" fill="#e8e5fb"/><rect x="2042.25" y="404" width="93.25" height="98" fill="#e8e5fb"/><rect x="2139.50" y="404" width="93.25" height="98" fill="#e8e5fb"/><rect x="2236.75" y="404" width="93.25" height="98" fill="#e8e5fb"/></svg><div class="a" style="left:3206px;top:1520px;width:10px;height:80px;background:#e9e5fb"></div><div class="a" style="left:3206px;top:1614px;width:10px;height:80px;background:#b5a7f3"></div><div class="a" style="left:3206px;top:1708px;width:10px;height:80px;background:#6a42f2"></div><div class="a" style="left:3206px;top:1802px;width:10px;height:80px;background:#4a1fd3"></div><div class="a" style="left:3206px;top:1896px;width:10px;height:80px;background:#3a1a86"></div><div class="t" style="left:3227px;top:1576.7px;font-size:24px;color:#333;letter-spacing:-0.1px;">Very Low</div><div class="t" style="left:3227px;top:1670.3px;font-size:24px;color:#333;letter-spacing:-0.1px;">Low</div><div class="t" style="left:3227px;top:1764.3px;font-size:24px;color:#333;letter-spacing:-0.1px;">Medium</div><div class="t" style="left:3227px;top:1858.3px;font-size:24px;color:#333;letter-spacing:-0.1px;">High</div><div class="a" style="left:1688px;top:1878px;width:80px;height:16px;background:#6e6e6e;border:1.5px solid #b8b8b8;border-radius:8px;box-sizing:border-box;opacity:0.95"></div><div class="a" style="left:3442px;top:511px;width:14px;height:960px;background:#939393;border-radius:7px 0 0 7px"></div></div><svg class="a" style="left:0px;top:1898px" width="24" height="24" viewBox="0 0 24 24"><path d="M0,0 A24,24 0 0 0 24,24 H0 Z" fill="#0c140c"/></svg><svg class="a" style="left:3432px;top:1898px" width="24" height="24" viewBox="0 0 24 24"><path d="M24,0 A24,24 0 0 1 0,24 H24 Z" fill="#0c140c"/></svg>
</body></html>
